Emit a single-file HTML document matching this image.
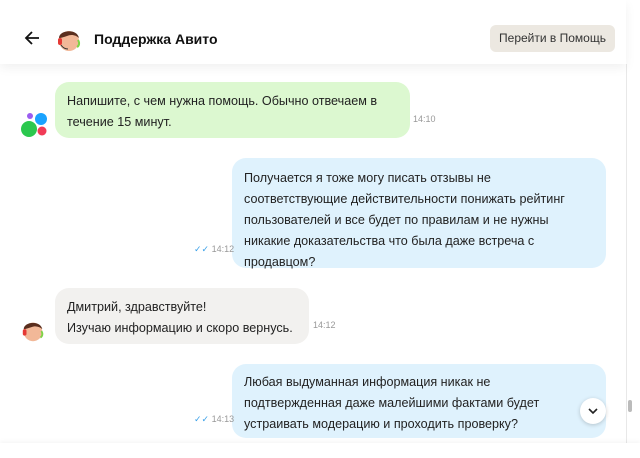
<!DOCTYPE html>
<html><head><meta charset="utf-8"><style>
*{margin:0;padding:0;box-sizing:border-box}
body{width:640px;height:458px;background:#fff;font-family:"Liberation Sans",sans-serif;position:relative;overflow:hidden;color:#222}
.hdr{position:absolute;left:0;top:0;width:626px;height:64px;background:#fff;box-shadow:0 4px 10px rgba(0,0,0,0.06);z-index:2}
.title{position:absolute;left:94px;top:31px;font-size:14px;font-weight:bold;color:#111}
.btn{position:absolute;left:490px;top:25px;width:125px;height:27px;background:#ece8e1;border-radius:6px;font-size:12px;line-height:27px;text-align:center;color:#333}
.b{position:absolute;font-size:12.6px;line-height:21px;padding:0 12px;border-radius:14px;color:#222;white-space:nowrap}
.t{position:absolute;font-size:9px;color:#999}
.sb{position:absolute;left:626px;top:64px;width:1px;height:380px;background:#e8e8e8}
</style></head><body>
<div class="hdr">
<svg style="position:absolute;left:24px;top:30px" width="16" height="16" viewBox="0 0 16 16"><path d="M15 8H2M8 2L2 8l6 6" stroke="#111" stroke-width="1.8" fill="none"/></svg>
<svg style="position:absolute;left:55px;top:26px" width="28" height="28" viewBox="0 0 28 28"><circle cx="14" cy="15" r="10" fill="#f2b898"/><path d="M4 12c0-8 18-10 20 0c-3-3-8-4-12-2c-3 1-6 2-8 2z" fill="#5a2e1e"/><rect x="3" y="12" width="4" height="7" rx="2" fill="#e53935"/><path d="M23 14c2 3 1 6-1 7" stroke="#7ed348" stroke-width="2" fill="none"/><path d="M6 19c2 3 5 4 7 4" stroke="#333" stroke-width="1" fill="none"/></svg>
<div class="title">Поддержка Авито</div>
<div class="btn">Перейти в Помощь</div>
</div>
<div class="sb"></div>
<div style="position:absolute;left:628px;top:400px;width:4px;height:12px;background:#bbb;border-radius:2px"></div>
<svg style="position:absolute;left:20px;top:110px" width="28" height="28"><circle cx="9" cy="19" r="8" fill="#2bc84e"/><circle cx="21" cy="9" r="6" fill="#1aa3ff"/><circle cx="22" cy="21" r="4.5" fill="#f13b57"/><circle cx="10" cy="6" r="3" fill="#9b5cf0"/></svg>
<div class="b" style="left:55px;top:82px;width:355px;height:56px;background:#dcf8d0;padding-top:9px">Напишите, с чем нужна помощь. Обычно отвечаем в<br>течение 15 минут.</div>
<div class="t" style="left:413px;top:114px">14:10</div>
<div class="b" style="left:232px;top:158px;width:374px;height:110px;background:#dff2fd;padding-top:10px">Получается я тоже могу писать отзывы не<br>соответствующие действительности понижать рейтинг<br>пользователей и все будет по правилам и не нужны<br>никакие доказательства что была даже встреча с<br>продавцом?</div>
<div class="t" style="left:194px;top:244px"><span style="color:#3aa0e8">✓✓</span> 14:12</div>
<svg style="position:absolute;left:20px;top:318px" width="26" height="26" viewBox="0 0 28 28"><circle cx="14" cy="15" r="10" fill="#f2b898"/><path d="M4 12c0-8 18-10 20 0c-3-3-8-4-12-2c-3 1-6 2-8 2z" fill="#5a2e1e"/><rect x="3" y="12" width="4" height="7" rx="2" fill="#e53935"/><path d="M23 14c2 3 1 6-1 7" stroke="#7ed348" stroke-width="2" fill="none"/></svg>
<div class="b" style="left:55px;top:288px;width:254px;height:56px;background:#f2f1ef;padding-top:9px">Дмитрий, здравствуйте!<br>Изучаю информацию и скоро вернусь.</div>
<div class="t" style="left:313px;top:320px">14:12</div>
<div class="b" style="left:232px;top:364px;width:374px;height:74px;background:#dff2fd;padding-top:8px">Любая выдуманная информация никак не<br>подтвержденная даже малейшими фактами будет<br>устраивать модерацию и проходить проверку?</div>
<div class="t" style="left:194px;top:414px"><span style="color:#3aa0e8">✓✓</span> 14:13</div>
<div style="position:absolute;left:580px;top:398px;width:26px;height:26px;border-radius:50%;background:#fff;box-shadow:0 1px 4px rgba(0,0,0,0.2)"><svg width="26" height="26"><path d="M9 11l4 4 4-4" stroke="#222" stroke-width="1.6" fill="none"/></svg></div>
<div style="position:absolute;left:0;top:443px;width:640px;height:15px;background:#fff;box-shadow:0 -2px 4px rgba(0,0,0,0.04)"></div>
</body></html>
